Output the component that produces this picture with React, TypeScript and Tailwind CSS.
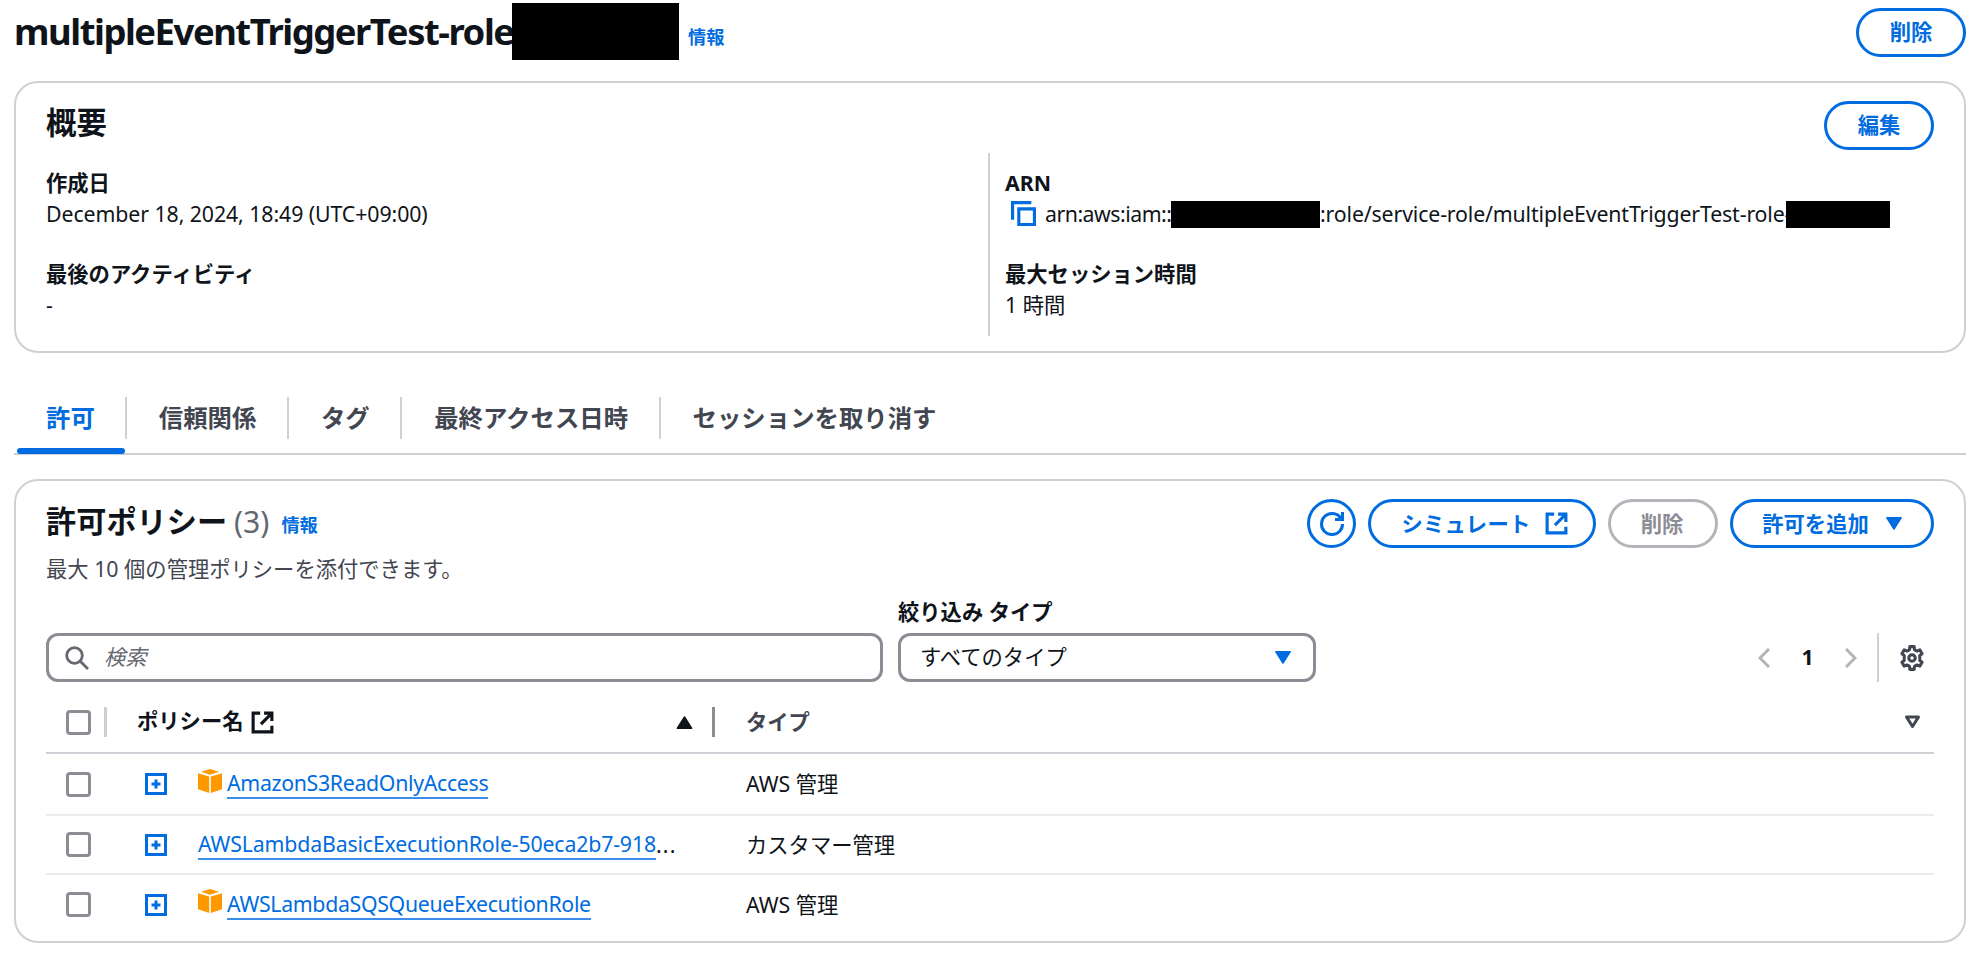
import type { ReactNode } from "react";

type Policy = {
  name: string;
  type: string;
  awsManaged: boolean;
  truncated?: boolean;
};

const tabs = ["許可", "信頼関係", "タグ", "最終アクセス日時", "セッションを取り消す"];

const policies: Policy[] = [
  { name: "AmazonS3ReadOnlyAccess", type: "AWS 管理", awsManaged: true },
  {
    name: "AWSLambdaBasicExecutionRole-50eca2b7-918",
    type: "カスタマー管理",
    awsManaged: false,
    truncated: true,
  },
  { name: "AWSLambdaSQSQueueExecutionRole", type: "AWS 管理", awsManaged: true },
];

function ExternalIcon({ className }: { className?: string }) {
  return (
    <svg viewBox="0 0 16 16" fill="none" stroke="currentColor" strokeWidth="2" className={className}>
      <path d="M9 2h5v5M7 9l7-7M14 10v4H2V2h4.500" />
    </svg>
  );
}

function CopyIcon() {
  return (
    <svg viewBox="0 0 16 16" fill="none" stroke="#006ce0" strokeWidth="2" className="size-[25px]">
      <path d="M15 5H5v10h10V5Z" />
      <path d="M13 1H1v11" />
    </svg>
  );
}

function RefreshIcon() {
  return (
    <svg viewBox="0 0 16 16" fill="none" stroke="currentColor" strokeWidth="2" className="size-6">
      <path d="M10 5h5V0" />
      <path d="M15 8a6.957 6.957 0 0 1-7 7 6.957 6.957 0 0 1-7-7 6.957 6.957 0 0 1 7-7 6.87 6.87 0 0 1 6.3 4" />
    </svg>
  );
}

function GearIcon() {
  return (
    <svg viewBox="0 0 24 24" fill="none" stroke="#424650" strokeWidth="2.8" strokeLinejoin="round" className="size-[26px]">
      <path d="M10 1.500h4l.3 2.800 2.300 1.300 2.600-1.100 2.100 3.600-2.100 1.600v4.600l2.100 1.600-2.100 3.600-2.600-1.100-2.300 1.300-.3 2.800h-4l-.3-2.800-2.300-1.300-2.600 1.100-2.100-3.600 2.100-1.600V9.700L2.700 8.100l2.100-3.600 2.600 1.100 2.300-1.300z" />
      <circle cx="12" cy="12" r="3" />
    </svg>
  );
}

function BoxIcon() {
  return (
    <svg viewBox="0 0 24 25" fill="#ff9900" className="mr-[5px] h-[25px] w-6 shrink-0">
      <path d="M12 0 21 2.800 12 5.800 3 2.800Z" />
      <path d="M0 4.200 11.200 7.400V24L0 20.200Z" />
      <path d="M24 4.200 12.800 7.400V24L24 20.200Z" />
    </svg>
  );
}

function ExpandIcon() {
  return (
    <svg viewBox="0 0 22 22" fill="none" stroke="#006ce0" strokeWidth="3" className="size-[22px]">
      <path d="M1.500 1.500h19v19h-19zM11 6.500v9M6.500 11h9" />
    </svg>
  );
}

function Caret({ className }: { className?: string }) {
  return (
    <svg viewBox="0 0 16 13" fill="currentColor" className={className}>
      <path d="M1 0h14q1.300 .1.700 1.200L8.800 12.300q-.8 1-1.600 0L.3 1.200Q-.300.100 1 0Z" />
    </svg>
  );
}

function Checkbox() {
  return <span className="block size-[25px] rounded-[4px] border-[3px] border-[#8c8c94] bg-white" />;
}

function Redacted({ className }: { className: string }) {
  return <span className={`inline-block shrink-0 bg-black ${className}`} />;
}

function Button({
  children,
  className = "",
  disabled = false,
}: {
  children: ReactNode;
  className?: string;
  disabled?: boolean;
}) {
  return (
    <button
      type="button"
      disabled={disabled}
      className={`flex h-[49px] shrink-0 items-center justify-center rounded-full border-[3px] bg-white text-[21.3px] leading-none font-bold ${
        disabled ? "border-[#b4b4bb] text-[#8c8c94]" : "border-[#006ce0] text-[#006ce0]"
      } ${className}`}
    >
      {children}
    </button>
  );
}

function Field({ label, children }: { label: string; children: ReactNode }) {
  return (
    <div className="h-[91px]">
      <dt className="h-[31px] leading-[31px] font-bold">{label}</dt>
      <dd className="flex h-[31px] items-center leading-[31px] whitespace-nowrap">{children}</dd>
    </div>
  );
}

function Summary() {
  return (
    <section className="mt-6 h-[272px] rounded-[24px] border-2 border-[#cfcfd5] px-[30px] pt-[18px]">
      <div className="flex h-[52px] justify-between">
        <h2 className="pt-1 text-[30.4px] leading-[36px] font-bold">概要</h2>
        <Button className="w-[110px] pb-0.5">編集</Button>
      </div>
      <div className="flex">
        <dl className="w-[942px] pt-[14px]">
          <Field label="作成日">
            <span className="tracking-[-0.08px]">December 18, 2024, 18:49 (UTC+09:00)</span>
          </Field>
          <Field label="最後のアクティビティ">-</Field>
        </dl>
        <dl className="h-[183px] border-l-2 border-[#cfcfd5] pt-[14px] pl-[15px]">
          <Field label="ARN">
            <span className="mr-[9px] ml-1.5">
              <CopyIcon />
            </span>
            <span className="w-[126px] tracking-[-0.5px]">arn:aws:iam::</span>
            <Redacted className="mt-0.5 h-[27px] w-[149px]" />
            <span className="w-[466px] tracking-[-0.14px]">
              :role/service-role/multipleEventTriggerTest-role-
            </span>
            <Redacted className="z-10 mt-0.5 h-[27px] w-[104px]" />
          </Field>
          <Field label="最大セッション時間">1 時間</Field>
        </dl>
      </div>
    </section>
  );
}

function Tabs() {
  return (
    <nav className="mt-[36px] flex h-[66px] border-b-2 border-[#cfcfd5] text-[24.4px] font-bold text-[#424650]">
      {tabs.map((tab, index) => (
        <div
          key={tab}
          className={
            index === 0
              ? "ml-[3px] flex h-[65px] flex-col justify-between text-[#006ce0]"
              : "flex h-[65px] flex-col"
          }
        >
          <div
            className={`mt-[8px] flex h-[42px] items-center leading-none ${
              index === 0 ? "pr-[30px] pl-[29px]" : "pr-[30.5px] pl-[32px]"
            } ${index < tabs.length - 1 ? "border-r-2 border-[#cfcfd5]" : ""}`}
          >
            {tab}
          </div>
          {index === 0 && <div className="mr-0.5 h-[6px] rounded-[3px] bg-[#006ce0]" />}
        </div>
      ))}
    </nav>
  );
}

function Toolbar() {
  return (
    <div className="mt-[10px] flex items-end">
      <div className="flex h-[49px] w-[837px] items-center rounded-[12px] border-[3px] border-[#8c8c94] pl-[16px]">
        <svg viewBox="0 0 24 24" fill="none" stroke="#656871" strokeWidth="2.8" className="size-6">
          <circle cx="9.500" cy="9.500" r="7.800" />
          <path d="m15 15 8 8" />
        </svg>
        <span className="ml-[15px] pb-0.5 text-[#656871] italic">検索</span>
      </div>
      <div className="ml-[15px]">
        <div className="h-[38px] leading-[33px] font-bold">絞り込み タイプ</div>
        <div className="flex h-[49px] w-[418px] items-center justify-between rounded-[12px] border-[3px] border-[#8c8c94] pr-[22px] pl-[19px]">
          <span className="pb-0.5">すべてのタイプ</span>
          <Caret className="h-[13px] w-4 text-[#006ce0]" />
        </div>
      </div>
      <div className="ml-auto flex h-[49px] items-center">
        <svg viewBox="0 0 12 20" fill="none" stroke="#b4b4bb" strokeWidth="3" className="h-5 w-3">
          <path d="M11 1 2 10l9 9" />
        </svg>
        <span className="w-[75px] pb-0.5 text-center font-bold">1</span>
        <svg viewBox="0 0 12 20" fill="none" stroke="#b4b4bb" strokeWidth="3" className="h-5 w-3">
          <path d="m1 1 9 9-9 9" />
        </svg>
        <span className="mr-[20px] ml-[20px] h-full w-0.5 bg-[#cfcfd5]" />
        <span className="mr-[9px]">
          <GearIcon />
        </span>
      </div>
    </div>
  );
}

function PolicyTable() {
  return (
    <div>
      <div className="flex h-[72px] items-center border-b-2 border-[#cfcfd5] pt-[10px] font-bold">
        <div className="flex w-[91px] items-center pl-[19.5px]">
          <Checkbox />
          <span className="ml-[13.5px] h-[30px] w-[3px] bg-[#cfcfd5]" />
        </div>
        <div className="flex w-[609px] items-center pr-[31px]">
          <span className="pb-0.5">ポリシー名</span>
          <ExternalIcon className="ml-1.5 size-[25px]" />
          <Caret className="mr-[19px] ml-auto h-[13px] w-[17px] rotate-180" />
          <span className="h-[30px] w-[3px] bg-[#8c8c94]" />
        </div>
        <div className="flex grow items-center text-[#424650]">
          <span>タイプ</span>
          <svg viewBox="0 0 17 14" fill="none" stroke="currentColor" strokeWidth="3" strokeLinejoin="round" className="mr-[13px] ml-auto h-[14px] w-[17px]">
            <path d="M2.500 2h12l-6 9.500z" />
          </svg>
        </div>
      </div>
      {policies.map((policy, index) => (
        <div
          key={policy.name}
          className={`flex items-center ${index === 0 ? "h-[62px]" : "h-[59px]"} ${
            index < policies.length - 1 ? "border-b-2 border-[#ebebf0]" : ""
          }`}
        >
          <div className="flex w-[99px] items-center pl-[19.5px]">
            <Checkbox />
          </div>
          <div className="w-[53px]">
            <ExpandIcon />
          </div>
          <div className="flex w-[548px] items-center whitespace-nowrap">
            {policy.awsManaged && (
              <span className="-mt-1.5">
                <BoxIcon />
              </span>
            )}
            <a
              className={`border-b-2 border-[#3d8eea] leading-[28px] text-[#006ce0] ${
                policy.awsManaged ? "tracking-[-0.32px]" : "tracking-[-0.16px]"
              }`}
            >
              {policy.name}
            </a>
            {policy.truncated && <span className="tracking-[1.2px]">...</span>}
          </div>
          <div>{policy.type}</div>
        </div>
      ))}
    </div>
  );
}

export default function App() {
  return (
    <main className="h-[957px] w-[1986px] overflow-hidden bg-white pr-5 pl-3.5 font-['Noto_Sans','Noto_Sans_CJK_JP',sans-serif] text-[21.3px] leading-[30px] text-[#0f141a]">
      <header className="flex h-[57px] items-start justify-between">
        <div className="flex pt-[3px]">
          <h1 className="w-[498px] text-[36.4px] leading-[56px] font-bold tracking-[-1.45px] whitespace-nowrap">
            multipleEventTriggerTest-role
          </h1>
          <Redacted className="z-10 h-[57px] w-[167px]" />
          <a className="ml-[9px] pt-[19px] text-[18.2px] leading-[30px] font-bold text-[#006ce0]">情報</a>
        </div>
        <Button className="mt-[7.5px] w-[110px]">削除</Button>
      </header>

      <Summary />
      <Tabs />

      <section className="mt-[24px] h-[464px] rounded-[24px] border-2 border-[#cfcfd5] px-[30px] pt-[18px]">
        <div className="flex justify-between">
          <div>
            <div className="flex h-[49px] items-center pb-1">
              <h2 className="text-[30.2px] leading-[40px] font-bold">
                許可ポリシー <span className="-ml-px font-normal text-[#656871]">(3)</span>
              </h2>
              <a className="mt-[7px] ml-[12px] text-[18.2px] font-bold text-[#006ce0]">情報</a>
            </div>
            <p className="h-[37px] leading-[42px] text-[#424650]">最大 10 個の管理ポリシーを添付できます。</p>
          </div>
          <div className="flex gap-3">
            <Button className="w-[49px]">
              <RefreshIcon />
            </Button>
            <Button className="w-[228px] gap-[13px] pl-1.5">
              <span className="tracking-[0.3px]">シミュレート</span>
              <ExternalIcon className="size-[25px]" />
            </Button>
            <Button className="w-[110px] pr-0.5" disabled>
              削除
            </Button>
            <Button className="w-[204px] gap-[17px]">
              許可を追加
              <Caret className="h-[13px] w-4" />
            </Button>
          </div>
        </div>
        <Toolbar />
        <PolicyTable />
      </section>
    </main>
  );
}
